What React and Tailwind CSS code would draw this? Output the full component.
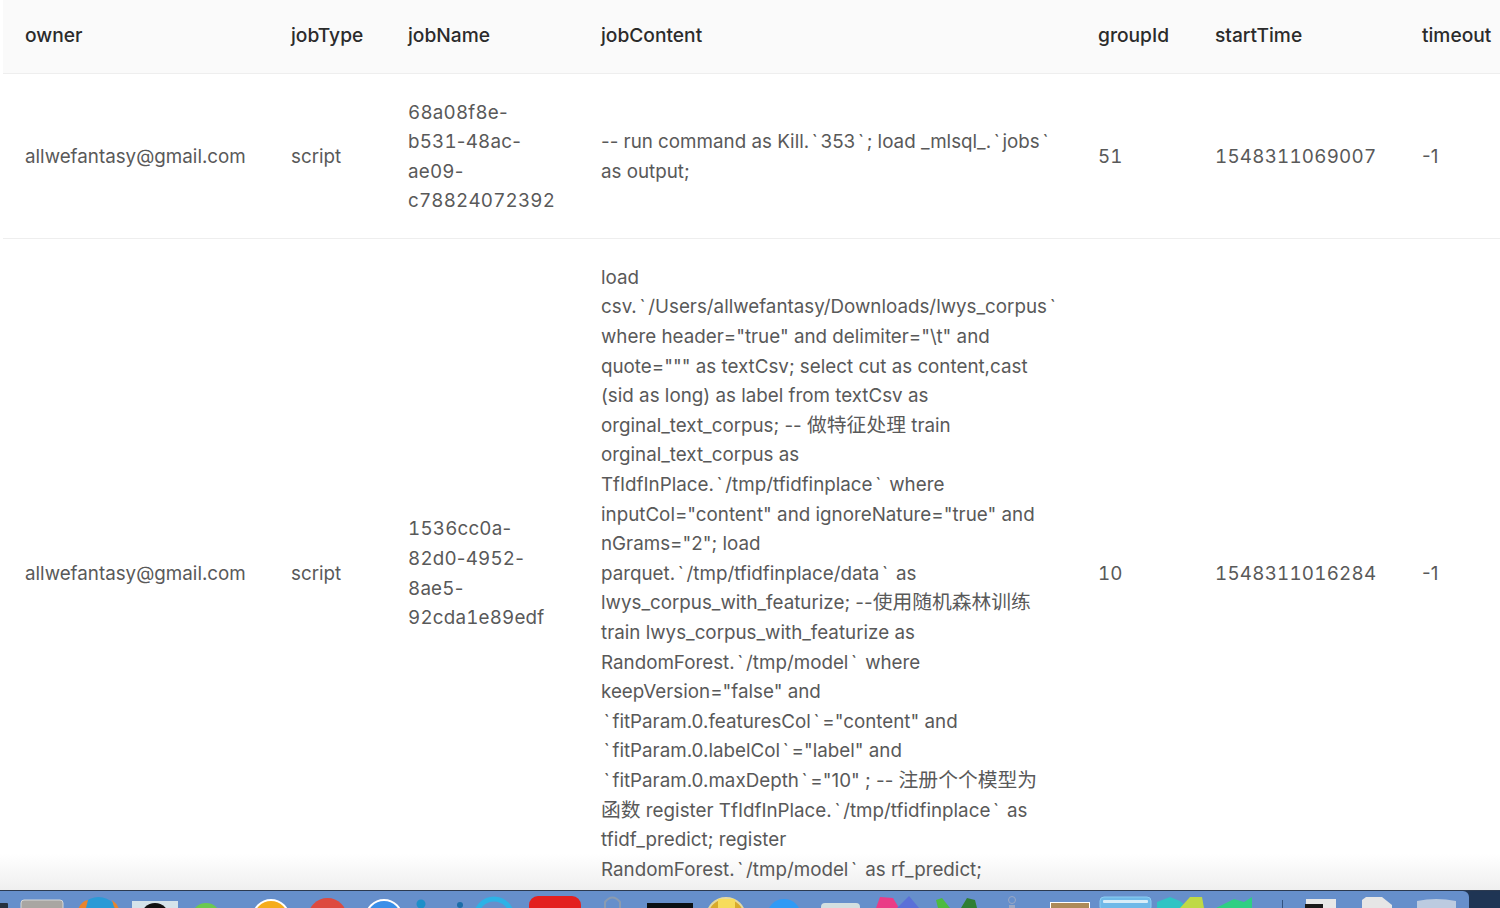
const rows = [
  {
    owner: 'allwefantasy@gmail.com',
    jobType: 'script',
    jobName: ['68a08f8e-', 'b531-48ac-', 'ae09-', 'c78824072392'],
    jobContent: [
      '-- run command as Kill.`353`; load _mlsql_.`jobs`',
      'as output;',
    ],
    groupId: '51',
    startTime: '1548311069007',
    timeout: '-1',
  },
  {
    owner: 'allwefantasy@gmail.com',
    jobType: 'script',
    jobName: ['1536cc0a-', '82d0-4952-', '8ae5-', '92cda1e89edf'],
    jobContent: [
      'load',
      'csv.`/Users/allwefantasy/Downloads/lwys_corpus`',
      'where header="true" and delimiter="\\t" and',
      'quote=""" as textCsv; select cut as content,cast',
      '(sid as long) as label from textCsv as',
      'orginal_text_corpus; -- 做特征处理 train',
      'orginal_text_corpus as',
      'TfIdfInPlace.`/tmp/tfidfinplace` where',
      'inputCol="content" and ignoreNature="true" and',
      'nGrams="2"; load',
      'parquet.`/tmp/tfidfinplace/data` as',
      'lwys_corpus_with_featurize; --使用随机森林训练',
      'train lwys_corpus_with_featurize as',
      'RandomForest.`/tmp/model` where',
      'keepVersion="false" and',
      '`fitParam.0.featuresCol`="content" and',
      '`fitParam.0.labelCol`="label" and',
      '`fitParam.0.maxDepth`="10" ; -- 注册个个模型为',
      '函数 register TfIdfInPlace.`/tmp/tfidfinplace` as',
      'tfidf_predict; register',
      'RandomForest.`/tmp/model` as rf_predict;',
    ],
    groupId: '10',
    startTime: '1548311016284',
    timeout: '-1',
  },
];

// digits are wide in the picture, but tabular hyphens look too loose
function JobName({ lines }) {
  return lines.map((line, i) => (
    <div key={i} className="whitespace-nowrap tabular-nums tracking-[0.2px]">
      {line.split(/(-)/).map((part, j) =>
        part === '-' ? <span key={j} className="[font-variant-numeric:normal]">-</span> : part
      )}
    </div>
  ));
}

// backticks sit with more air around them than in Inter, and the Chinese runs are a bit larger
function JobContent({ lines }) {
  return lines.map((line, i) => (
    <div key={i} className="whitespace-nowrap">
      {line.split(/(`|[\u4e00-\u9fff]+)/).map((part, j) => {
        if (part === '`') return <span key={j} className="px-[2.7px]">`</span>;
        if (/[\u4e00-\u9fff]/.test(part)) return <span key={j} className="text-[19.8px]">{part}</span>;
        return part;
      })}
    </div>
  ));
}

// y=0 here is the first pixel under the dock's dark top line
function Dock() {
  return (
    <svg width="1469" height="17" viewBox="0 0 1469 17" className="block">
      <rect x="-4" y="12" width="12" height="8" rx="1" fill="#26313f" />
      <rect x="21" y="9" width="42" height="14" rx="3" fill="#a9a6a2" stroke="#d8d8d8" />
      <circle cx="98.5" cy="27.5" r="21.5" fill="#2a9ad6" />
      <path d="M77 22 Q80 10 88 9 L86 17 Z" fill="#e8842c" />
      <path d="M112 9 Q119 14 120 22 L114 16 Z" fill="#e8842c" />
      <rect x="132" y="10" width="46" height="10" fill="#d5e3ea" />
      <circle cx="155" cy="26" r="14" fill="#111" />
      <circle cx="206" cy="27" r="15" fill="#6bc94f" />
      <circle cx="271" cy="27" r="18" fill="#f5ac1c" stroke="#fff" strokeWidth="2" />
      <circle cx="327.5" cy="26.5" r="19.5" fill="#dd4a3f" />
      <circle cx="384" cy="27" r="18" fill="#3a8fe8" stroke="#fff" strokeWidth="2" />
      <circle cx="421" cy="13" r="4.5" fill="#1d8fc9" />
      <circle cx="460" cy="14" r="3" fill="#1c6da8" />
      <circle cx="494" cy="26" r="18" fill="none" stroke="#2db2e6" strokeWidth="5" />
      <rect x="529" y="5" width="52" height="30" rx="9" fill="#e3201f" />
      <path d="M605 17 V11 Q612.5 2 620 11 V17" fill="none" stroke="#8b9bb0" strokeWidth="2" />
      <rect x="647" y="12" width="46" height="8" fill="#0b1114" />
      <circle cx="726" cy="26" r="19" fill="#d9ab2b" stroke="#e5d9a0" strokeWidth="2" />
      <rect x="718" y="8" width="17" height="9" fill="#f7dc5c" />
      <circle cx="784" cy="25" r="17" fill="#2f9af5" />
      <rect x="821" y="12" width="39" height="8" rx="4" fill="#d3dfe0" />
      <path d="M876 17 L880 6 L893 7 L899 17 Z" fill="#ea3c86" />
      <path d="M897 17 L909 5 L919 17 Z" fill="#5a70d8" />
      <path d="M936 9 L942 7 L950 17 H938 Z" fill="#4dbb3f" />
      <path d="M961 17 L967 7 L975 9 L977 17 Z" fill="#2f7f33" />
      <circle cx="1012" cy="9" r="3.5" fill="none" stroke="#9aa8c4" />
      <rect x="1009" y="14" width="6" height="3" fill="#9aa8c4" />
      <rect x="1050" y="11" width="40" height="8" fill="#fff" />
      <rect x="1051" y="12" width="38" height="6" fill="#ad8a58" />
      <rect x="1100" y="6" width="51" height="14" rx="4" fill="#6fb9e8" stroke="#8ccdf2" />
      <rect x="1103" y="9" width="45" height="3" rx="1" fill="#d8edf8" />
      <path d="M1157 17 V11 L1170 6 L1180 10 L1188 17 Z" fill="#2fc4c4" />
      <path d="M1180 17 L1190 6 H1202 L1204 17 Z" fill="#bfd945" />
      <path d="M1216 17 L1234 8 L1244 11 L1252 6 V17 Z" fill="#2fcf83" />
      <rect x="1282" y="9" width="1" height="8" fill="#33527f" />
      <rect x="1306" y="8" width="30" height="9" fill="#e8e8e8" />
      <rect x="1305" y="13" width="18" height="4" fill="#1a1a1a" />
      <path d="M1362 17 V9 L1366 6 H1382 L1392 14 V17 Z" fill="#e6e6e6" />
      <path d="M1417 10 Q1436 6 1456 10 V17 H1417 Z" fill="#bccbe0" />
    </svg>
  );
}

export default function App() {
  return (
    <div className="h-[908px] w-full overflow-hidden bg-white font-['Inter','Noto_Sans_CJK_SC',sans-serif] text-[18.8px] leading-[29.6px] flex flex-col">
      <div className="flex-1 min-h-0 pl-[3px] relative overflow-hidden">
        <div className="absolute left-0 right-0 bottom-0 h-[36px] bg-gradient-to-b from-[#ffffff] to-[#efefef]" />
        <table className="relative table-fixed border-collapse w-[1560px]">
          <colgroup>
            <col className="w-[265px]" />
            <col className="w-[117px]" />
            <col className="w-[193px]" />
            <col className="w-[497px]" />
            <col className="w-[117px]" />
            <col className="w-[207px]" />
            <col className="w-[164px]" />
          </colgroup>
          <thead>
            <tr className="bg-[#fafafa] border-b border-[#eeeeee] h-[73px] text-left text-[19.2px] text-[#2b2b2b]">
              {['owner', 'jobType', 'jobName', 'jobContent', 'groupId', 'startTime', 'timeout'].map((h) => (
                <th key={h} className="font-medium pl-[23px] first:pl-[22px] align-middle">{h}</th>
              ))}
            </tr>
          </thead>
          <tbody className="text-[#595959]">
            {rows.map((r) => (
              <tr key={r.startTime} className="border-b border-[#eeeeee]">
                <td className="pl-[22px] pt-[24px] pb-[22px] align-middle">{r.owner}</td>
                <td className="pl-[23px] pt-[24px] pb-[22px] align-middle">{r.jobType}</td>
                <td className="pl-[23px] pt-[24px] pb-[22px] align-middle"><JobName lines={r.jobName} /></td>
                <td className="pl-[23px] pt-[24px] pb-[22px] align-middle"><JobContent lines={r.jobContent} /></td>
                <td className="pl-[23px] pt-[24px] pb-[22px] align-middle tabular-nums">{r.groupId}</td>
                <td className="pl-[23px] pt-[24px] pb-[22px] align-middle tabular-nums tracking-[0.23px]">{r.startTime}</td>
                <td className="pl-[23px] pt-[24px] pb-[22px] align-middle">{r.timeout}</td>
              </tr>
            ))}
          </tbody>
        </table>
      </div>
      <div className="h-[18px] shrink-0 bg-[#1f3554] flex flex-col">
        <div className="h-px bg-[#2c3a50]" />
        <div className="flex-1 overflow-hidden w-[1469px] bg-[#668fcb] rounded-tr-[6px]">
          <Dock />
        </div>
      </div>
    </div>
  );
}
